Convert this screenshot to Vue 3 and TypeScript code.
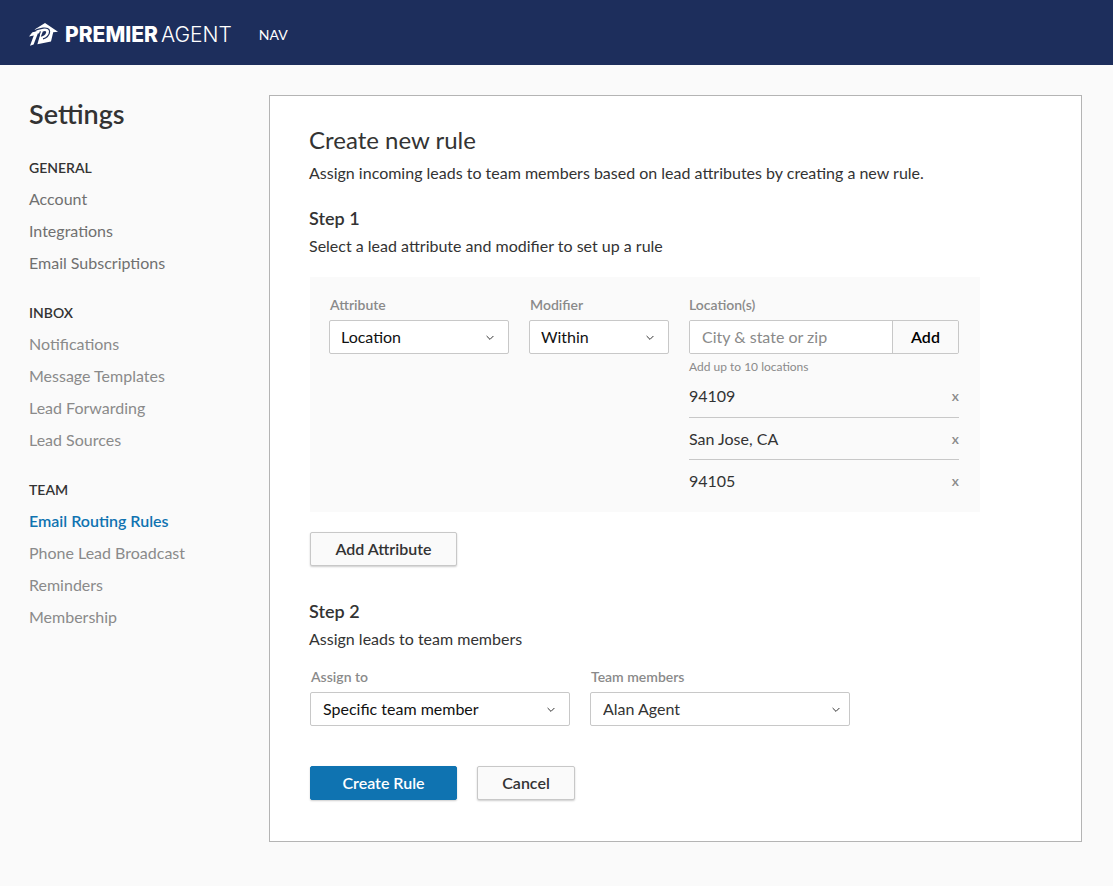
<script setup lang="ts">
import { ref } from 'vue'

interface NavItem {
  label: string
  active?: boolean
}
interface NavSection {
  title: string
  muted: boolean
  items: NavItem[]
}

const sections: NavSection[] = [
  {
    title: 'GENERAL',
    muted: false,
    items: [{ label: 'Account' }, { label: 'Integrations' }, { label: 'Email Subscriptions' }],
  },
  {
    title: 'INBOX',
    muted: true,
    items: [
      { label: 'Notifications' },
      { label: 'Message Templates' },
      { label: 'Lead Forwarding' },
      { label: 'Lead Sources' },
    ],
  },
  {
    title: 'TEAM',
    muted: true,
    items: [
      { label: 'Email Routing Rules', active: true },
      { label: 'Phone Lead Broadcast' },
      { label: 'Reminders' },
      { label: 'Membership' },
    ],
  },
]

const attribute = ref('Location')
const modifier = ref('Within')
const assignTo = ref('Specific team member')
const member = ref('Alan Agent')
const draft = ref('')
const locations = ref<string[]>(['94109', 'San Jose, CA', '94105'])

function addLocation(): void {
  const value = draft.value.trim()
  if (value && locations.value.length < 10) {
    locations.value.push(value)
    draft.value = ''
  }
}

function removeLocation(index: number): void {
  locations.value.splice(index, 1)
}
</script>

<template>
  <div class="page">
    <header class="topbar">
      <a class="brand" href="#" aria-label="Premier Agent">
        <svg class="mark" viewBox="0 0 29 24" aria-hidden="true">
          <path fill="#fff" d="M16 0 L29 8.8 L24.2 9.2 L22 18.6 L8.4 21.2 L11 12 L5.6 6.6 Z" />
          <path fill="#fff" d="M0 13.4 L3.4 9.2 L10 7.6 L4.6 21.4 L1 22.8 L4.8 12.4 Z" />
          <path
            fill="none"
            stroke="#1d2e5c"
            stroke-width="1.2"
            d="M3.4 8.6 C9 5.6 20.4 2.4 20.6 8.4 C20.6 12.6 17 15.2 14 15.8 M11.4 8.4 L6.4 22"
          />
          <path fill="#1d2e5c" d="M13.8 8.6 C16.4 7.4 17.6 8.2 17 10 C16.2 12.2 14.2 13.2 11.8 13.8 Z" />
        </svg>
        <span class="brand-name"><b>PREMIER</b><span>AGENT</span></span>
      </a>
      <nav><a class="top-link" href="#">NAV</a></nav>
    </header>

    <div class="body">
      <aside class="sidebar">
        <h1>Settings</h1>
        <nav v-for="section in sections" :key="section.title" class="section">
          <h2>{{ section.title }}</h2>
          <ul :class="{ muted: section.muted }">
            <li v-for="item in section.items" :key="item.label">
              <a href="#" :class="{ active: item.active }">{{ item.label }}</a>
            </li>
          </ul>
        </nav>
      </aside>

      <main class="panel">
        <h2 class="title">Create new rule</h2>
        <p>Assign incoming leads to team members based on lead attributes by creating a new rule.</p>

        <h3 class="step">Step 1</h3>
        <p>Select a lead attribute and modifier to set up a rule</p>

        <div class="inset rule-box">
          <div class="field attribute">
            <label for="attribute">Attribute</label>
            <div class="select">
              <select id="attribute" v-model="attribute">
                <option>Location</option>
              </select>
              <svg viewBox="0 0 8 6" aria-hidden="true"><path d="M0.6 1 L4 4.4 L7.4 1" /></svg>
            </div>
          </div>
          <div class="field modifier">
            <label for="modifier">Modifier</label>
            <div class="select">
              <select id="modifier" v-model="modifier">
                <option>Within</option>
              </select>
              <svg viewBox="0 0 8 6" aria-hidden="true"><path d="M0.6 1 L4 4.4 L7.4 1" /></svg>
            </div>
          </div>
          <div class="field locations">
            <label for="location">Location(s)</label>
            <form class="adder" @submit.prevent="addLocation">
              <input id="location" v-model="draft" type="text" placeholder="City &amp; state or zip" />
              <button type="submit">Add</button>
            </form>
            <small>Add up to 10 locations</small>
            <ul class="places">
              <li v-for="(place, index) in locations" :key="place">
                <span>{{ place }}</span>
                <button type="button" :aria-label="`Remove ${place}`" @click="removeLocation(index)">x</button>
              </li>
            </ul>
          </div>
        </div>

        <div class="inset">
          <button class="btn wide" type="button">Add Attribute</button>
        </div>

        <h3 class="step second">Step 2</h3>
        <p>Assign leads to team members</p>

        <div class="inset assign">
          <div class="field">
            <label for="assign">Assign to</label>
            <div class="select">
              <select id="assign" v-model="assignTo">
                <option>Specific team member</option>
              </select>
              <svg viewBox="0 0 8 6" aria-hidden="true"><path d="M0.6 1 L4 4.4 L7.4 1" /></svg>
            </div>
          </div>
          <div class="field">
            <label for="member">Team members</label>
            <div class="select soft">
              <select id="member" v-model="member">
                <option>Alan Agent</option>
              </select>
              <svg viewBox="0 0 8 6" aria-hidden="true"><path d="M0.6 1 L4 4.4 L7.4 1" /></svg>
            </div>
          </div>
        </div>

        <div class="inset actions">
          <button class="btn wide primary" type="button">Create Rule</button>
          <button class="btn" type="button">Cancel</button>
        </div>
      </main>
    </div>
  </div>
</template>

<style>
body {
  background: #fafafa;
}
</style>

<style scoped>
.page {
  min-height: 100vh;
  background: #fafafa;
  color: #333;
  font: 16px/24px Lato, 'Open Sans', sans-serif;
}
*,
*::before {
  box-sizing: border-box;
}
h1,
h2,
h3,
p,
ul {
  margin: 0;
  padding: 0;
}
ul {
  list-style: none;
}
a {
  color: inherit;
  text-decoration: none;
}
button,
input,
select {
  font: inherit;
  color: inherit;
}
button {
  cursor: pointer;
}

.topbar {
  display: flex;
  align-items: center;
  gap: 27px;
  height: 65px;
  padding: 4px 29px 0;
  background: #1d2e5c;
  color: #fff;
}
.brand {
  display: flex;
  align-items: center;
  gap: 7px;
}
.mark {
  width: 29px;
  height: 24px;
}
.brand-name {
  display: flex;
  gap: 3px;
  font: 300 21px/24px Inter, sans-serif;
}
.brand-name b {
  font-weight: 800;
}
.top-link {
  font-size: 14px;
}

.body {
  display: flex;
  align-items: flex-start;
  padding: 30px 31px 44px 29px;
}
.sidebar {
  flex: 0 0 240px;
  padding-top: 3px;
}
.sidebar h1 {
  margin-bottom: 30px;
  font-size: 27px;
  font-weight: 600;
  line-height: 32px;
}
.section {
  margin-bottom: 26px;
}
.section h2 {
  margin-bottom: 7px;
  font-size: 14px;
  font-weight: 600;
  line-height: 16px;
}
.section li {
  line-height: 32px;
  color: #707070;
}
.section .muted li {
  color: #8a8a8a;
}
.section .active {
  color: #0f73b1;
  font-weight: 600;
}

.panel {
  flex: 1;
  min-width: 0;
  padding: 28px 39px 41px;
  border: 1px solid #b4b4b4;
  background: #fff;
}
.title {
  margin-bottom: 5px;
  font-size: 24px;
  font-weight: 400;
  line-height: 32px;
}
.step {
  margin: 21px 0 4px;
  font-size: 18px;
  font-weight: 600;
  line-height: 24px;
}
.step.second {
  margin-top: 33px;
}
.inset {
  margin-left: 1px;
}
.rule-box {
  display: flex;
  flex-wrap: wrap;
  align-items: flex-start;
  gap: 20px;
  max-width: 670px;
  margin-top: 19px;
  margin-bottom: 20px;
  padding: 20px 20px 10px 19px;
  background: #fafafa;
}
.field {
  display: flex;
  flex-direction: column;
  min-width: 0;
}
.field label {
  margin-bottom: 7px;
  padding-left: 1px;
  color: #8a8a8a;
  font-size: 14px;
  font-weight: 600;
  line-height: 16px;
}
.attribute {
  flex: 0 1 180px;
}
.modifier {
  flex: 0 1 140px;
}
.locations {
  flex: 0 1 270px;
}
.field.locations label {
  padding-left: 0;
}
.select {
  position: relative;
}
.select select {
  display: block;
  width: 100%;
  height: 34px;
  padding: 0 32px 0 12px;
  border: 1px solid #c8c8c8;
  border-radius: 2px;
  background: #fff;
  color: #111;
  line-height: 24px;
  appearance: none;
}
.rule-box .select select {
  padding-left: 11px;
}
.select.soft select {
  color: #333;
}
.select svg {
  position: absolute;
  top: 15px;
  right: 15px;
  width: 8px;
  height: 6px;
  fill: none;
  stroke: #333;
  pointer-events: none;
}
.select.soft svg {
  right: 10px;
}
.adder {
  display: flex;
  height: 34px;
  border: 1px solid #c8c8c8;
  border-radius: 2px;
  overflow: hidden;
}
.adder input {
  flex: 1;
  min-width: 0;
  padding: 0 12px;
  border: 0;
  background: #fff;
}
.adder input::placeholder {
  color: #8a8a8a;
  opacity: 1;
}
.adder button {
  flex: 0 0 66px;
  padding: 0;
  border: 0;
  border-left: 1px solid #c8c8c8;
  background: #fafafa;
  color: #000;
  font-weight: 600;
}
small {
  margin-top: 5px;
  color: #8a8a8a;
  font-size: 12px;
  line-height: 16px;
}
.places li {
  display: flex;
  align-items: center;
  justify-content: space-between;
  height: 42px;
  border-bottom: 1px solid #c8c8c8;
}
.places li:first-child {
  height: 43px;
}
.places li:last-child {
  border-bottom: 0;
}
.places button {
  padding: 0;
  border: 0;
  background: none;
  color: #8a8a8a;
  font-size: 14px;
  font-weight: 600;
  line-height: 16px;
}
.btn {
  display: block;
  min-width: 98px;
  height: 34px;
  padding: 0 16px;
  border: 1px solid #c8c8c8;
  border-radius: 2px;
  background: #fafafa;
  box-shadow: 0 1px 2px rgba(0, 0, 0, 0.2);
  font-weight: 600;
}
.btn.wide {
  min-width: 147px;
}
.btn.primary {
  border-color: #0f73b1;
  background: #0f73b1;
  color: #fff;
}
.assign {
  display: flex;
  flex-wrap: wrap;
  gap: 20px;
  margin-top: 18px;
}
.assign .field {
  flex: 0 1 260px;
}
.actions {
  display: flex;
  gap: 20px;
  margin-top: 40px;
}
</style>
